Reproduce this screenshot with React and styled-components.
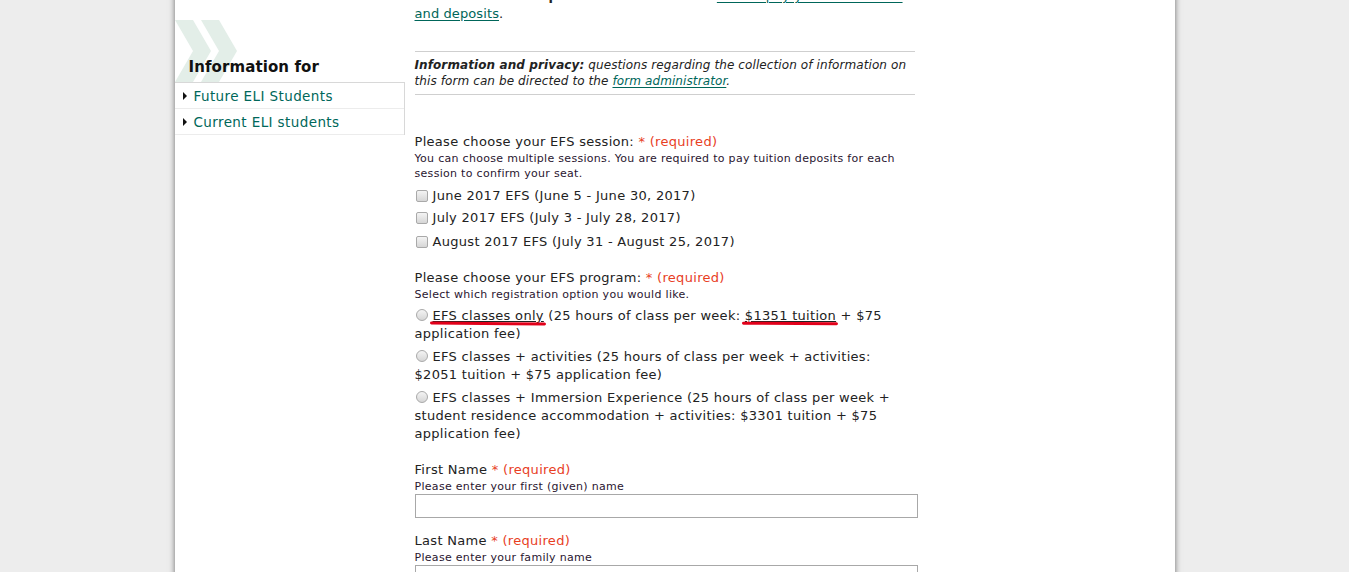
import styled, { createGlobalStyle } from "styled-components"

const GlobalStyle = createGlobalStyle`
  html, body {
    margin: 0;
    padding: 0;
    background: #ededed;
    font-family: "DejaVu Sans", Verdana, sans-serif;
    color: #222;
    overflow: hidden;
  }
`

const sessions = [
  "June 2017 EFS (June 5 - June 30, 2017)",
  "July 2017 EFS (July 3 - July 28, 2017)",
  "August 2017 EFS (July 31 - August 25, 2017)",
]

export default function App() {
  return (
    <>
      <GlobalStyle />
      <Page>
        <Sidebar>
          <Chevrons viewBox="0 0 62 62" aria-hidden="true">
            <polygon points="0,0 18,0 36,31 18,62 0,62 18,31" fill="#e3eee8" />
            <polygon points="26,0 44,0 62,31 44,62 26,62 44,31" fill="#e3eee8" />
          </Chevrons>
          <SideTitle>Information for</SideTitle>
          <SideList>
            <SideItem><a href="#">Future ELI Students</a></SideItem>
            <SideItem><a href="#">Current ELI students</a></SideItem>
          </SideList>
        </Sidebar>

        <Main>
          <Intro>
            <b>Session tuition deposit:</b> Learn more about <Link href="#">how to pay your tuition fees and deposits</Link>.
          </Intro>

          <Privacy>
            <b>Information and privacy:</b> questions regarding the collection of information on
            this form can be directed to the <Link href="#">form administrator</Link>.
          </Privacy>

          <Field $top={38}>
            <Label>Please choose your EFS session: <Req>*</Req> <Req>(required)</Req></Label>
            <Help>You can choose multiple sessions. You are required to pay tuition deposits for each session to confirm your seat.</Help>
            <Options $top={4}>
              {sessions.map((s, i) => (
                <CheckRow key={s} $extra={i === 2 ? 2 : 0}>
                  <Check type="checkbox" />
                  <span>{s}</span>
                </CheckRow>
              ))}
            </Options>
          </Field>

          <Field $top={16}>
            <Label>Please choose your EFS program: <Req>*</Req> <Req>(required)</Req></Label>
            <Help>Select which registration option you would like.</Help>
            <Options $top={5}>
              <RadioRow>
                <Radio type="radio" name="prog" />
                <Marked>EFS classes only</Marked> (25 hours of class per week: <Marked>$1351 tuition</Marked> + $75 application fee)
              </RadioRow>
              <RadioRow>
                <Radio type="radio" name="prog" />
                EFS classes + activities (25 hours of class per week + activities: $2051 tuition + $75 application fee)
              </RadioRow>
              <RadioRow $last>
                <Radio type="radio" name="prog" />
                EFS classes + Immersion Experience (25 hours of class per week + student residence accommodation + activities: $3301 tuition + $75 application fee)
              </RadioRow>
            </Options>
          </Field>

          <Field $top={18}>
            <Label>First Name <Req>*</Req> <Req>(required)</Req></Label>
            <Help>Please enter your first (given) name</Help>
            <TextInput type="text" />
          </Field>

          <Field $top={14}>
            <Label>Last Name <Req>*</Req> <Req>(required)</Req></Label>
            <Help>Please enter your family name</Help>
            <TextInput type="text" />
          </Field>
        </Main>
      </Page>
    </>
  )
}

const Page = styled.div`
  width: 1000px;
  min-height: 700px;
  margin: -13px auto 0;
  background: #fff;
  box-shadow: 0 0 6px rgba(0, 0, 0, 0.55);
  display: flex;
  gap: 10px;
`

const Sidebar = styled.aside`
  width: 230px;
  flex-shrink: 0;
  position: relative;
  padding-top: 33px;
`

const Chevrons = styled.svg`
  position: absolute;
  left: 0;
  top: 33px;
  width: 62px;
  height: 62px;
`

const SideTitle = styled.h3`
  position: relative;
  margin: 0;
  padding: 0 0 6px 14px;
  height: 62px;
  box-sizing: border-box;
  display: flex;
  align-items: flex-end;
  font-size: 15px;
  font-weight: bold;
  color: #111;
  letter-spacing: 0.1px;
`

const SideList = styled.ul`
  position: relative;
  list-style: none;
  margin: 0;
  padding: 0;
  border-top: 1px solid #d8d8d8;
  border-right: 1px solid #d8d8d8;
  background: #fff;
`

const SideItem = styled.li`
  height: 25px;
  border-bottom: 1px solid #ececec;
  display: flex;
  align-items: center;
  padding-left: 8px;
  font-size: 13.5px;
  letter-spacing: 0.4px;

  &::before {
    content: "";
    width: 0;
    height: 0;
    border-top: 4px solid transparent;
    border-bottom: 4px solid transparent;
    border-left: 4px solid #111;
    margin-right: 7px;
  }

  a {
    color: #00675a;
    text-decoration: none;
  }
`

const Main = styled.main`
  width: 500px;
  font-size: 13px;
  letter-spacing: 0.3px;
`

const Intro = styled.p`
  margin: 0 0 28px;
  line-height: 18px;
  letter-spacing: 0.1px;
`

const Link = styled.a`
  color: #00665a;
  text-decoration: underline;
  text-underline-offset: 2px;
`

const Privacy = styled.p`
  margin: 0;
  padding: 5px 0 5px;
  border-top: 1px solid #cfcfcf;
  border-bottom: 1px solid #cfcfcf;
  font-size: 12px;
  font-style: italic;
  line-height: 16px;
  letter-spacing: 0.1px;
`

const Field = styled.div`
  margin-top: ${(p) => p.$top}px;
`

const Label = styled.div`
  line-height: 18px;
  font-size: 13px;
  color: #222;
`

const Req = styled.span`
  color: #e8401f;
`

const Help = styled.div`
  font-size: 11px;
  line-height: 15px;
  color: #2a1630;
  letter-spacing: 0.3px;
`

const Options = styled.div`
  margin-top: ${(p) => p.$top}px;
`

const CheckRow = styled.label`
  display: flex;
  align-items: center;
  gap: 5px;
  height: 22px;
  margin-top: ${(p) => p.$extra}px;
  line-height: 18px;
`

const boxBase = `
  appearance: none;
  margin: 0 0 0 1px;
  width: 12px;
  height: 12px;
  border: 1px solid #a9a9a9;
  background: linear-gradient(#f4f4f4, #d6d6d6);
  flex-shrink: 0;
`

const Check = styled.input`
  ${boxBase}
  border-radius: 2px;
`

const RadioRow = styled.label`
  display: block;
  position: relative;
  line-height: 18px;
  margin-bottom: ${(p) => (p.$last ? 0 : 5)}px;
  padding-right: 10px;
`

const Radio = styled.input`
  ${boxBase}
  border-radius: 50%;
  vertical-align: -1px;
  margin-right: 5px;
`

const Marked = styled.span`
  position: relative;
  text-decoration: underline;

  &::after {
    content: "";
    position: absolute;
    left: -3px;
    right: -2px;
    bottom: -2px;
    height: 3px;
    border-radius: 2px;
    background: #e2001a;
    transform: rotate(0.4deg);
  }
`

const TextInput = styled.input`
  display: block;
  box-sizing: border-box;
  width: 503px;
  height: 24px;
  margin: 0;
  border: 1px solid #a8a8a8;
  background: #fff;
`
